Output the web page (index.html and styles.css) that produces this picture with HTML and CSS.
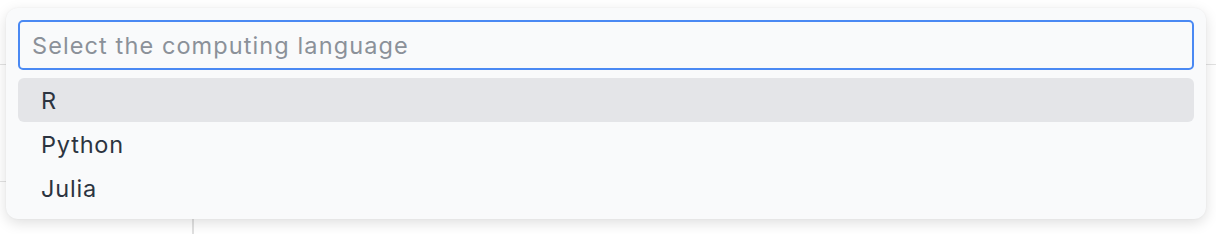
FILE: index.html
```html
<!doctype html>
<html lang="en">
<head>
    <meta charset="UTF-8">
    <title>Select language</title>
    <link rel="stylesheet" href="styles.css">
</head>
<body>

<div class="page">
    <div class="topbar"></div>
    <div class="main">
        <div class="sidebar">
            <div class="side-item"></div>
        </div>
        <div class="content"></div>
    </div>

    <div class="dropdown">
        <input class="search" type="text" placeholder="Select the computing language">
        <ul class="options">
            <li class="active">R</li>
            <li>Python</li>
            <li>Julia</li>
        </ul>
    </div>
</div>

</body>
</html>
```

FILE: styles.css
```css
* {
    padding: 0;
    margin: 0;
    box-sizing: border-box;
    list-style: none;
}

body {
    background-color: #ffffff;
    font-family: Inter, "Noto Sans", sans-serif;
}

.page {
    position: relative;
    width: 1216px;
    height: 234px;
    overflow: hidden;
}

.topbar {
    height: 65px;
    border-bottom: 1px solid #e2e2e2;
}

.main {
    display: flex;
    height: 169px;
}

.sidebar {
    width: 194px;
    border-right: 2px solid #e0e0e0;
}

.sidebar .side-item {
    height: 117px;
    border-bottom: 1px solid #e2e2e2;
}

.content {
    flex: 1;
}

.dropdown {
    position: absolute;
    left: 6px;
    top: 8px;
    width: 1200px;
    padding: 12px 12px 9px;
    background-color: #f9fafb;
    border-radius: 12px;
    box-shadow: 0 4px 14px rgba(0, 0, 0, 0.13), 0 0 2px rgba(0, 0, 0, 0.05);
}

.dropdown .search {
    display: block;
    width: 100%;
    height: 50px;
    padding: 0 12px;
    border: 2px solid #4a89f3;
    border-radius: 5px;
    background-color: #f9fafb;
    font-family: inherit;
    font-size: 23.5px;
    letter-spacing: 1.1px;
    color: #2c3440;
    outline: none;
}

.dropdown .search::placeholder {
    color: #8b9199;
}

.dropdown .options {
    margin-top: 8px;
}

.dropdown .options li {
    height: 44px;
    line-height: 44px;
    padding: 1px 0 0 23px;
    border-radius: 6px;
    font-size: 23.5px;
    letter-spacing: 0.8px;
    color: #2c3440;
}

.dropdown .options li.active {
    background-color: #e4e5e8;
}
```
